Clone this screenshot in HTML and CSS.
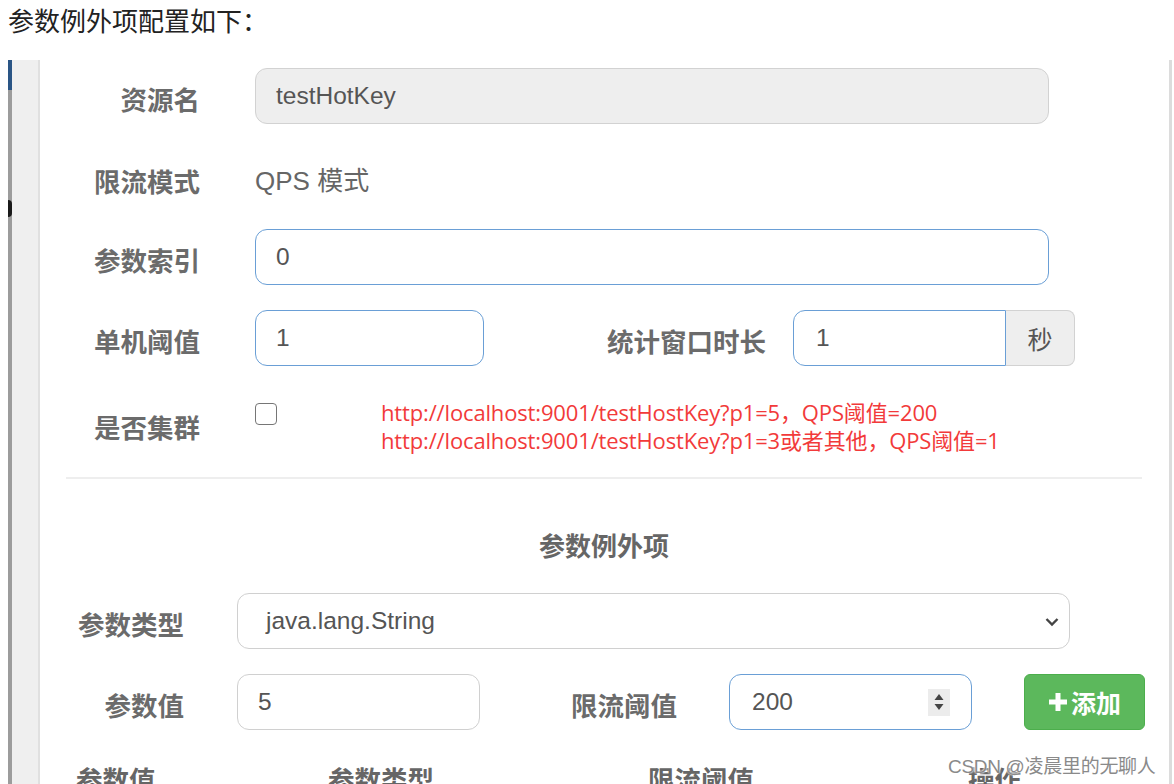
FILE: index.html
```html
<!DOCTYPE html>
<html lang="zh">
<head>
<meta charset="utf-8">
<link rel="stylesheet" href="styles.css">
</head>
<body>
<p class="intro">参数例外项配置如下：</p>
<div class="frame">
  <div class="gutter">
    <div class="rail"><span class="blob"></span></div>
    <div class="shade"></div>
  </div>
  <div class="content">
    <div class="row r1">
      <div class="label l1">资源名</div>
      <div class="field disabled w-full">testHotKey</div>
    </div>
    <div class="row r2">
      <div class="label l1">限流模式</div>
      <div class="static">QPS 模式</div>
    </div>
    <div class="row r3">
      <div class="label l1">参数索引</div>
      <div class="field focus w-full">0</div>
    </div>
    <div class="row r4">
      <div class="label l1">单机阈值</div>
      <div class="field focus w-small">1</div>
      <div class="label l-window">统计窗口时长</div>
      <div class="group">
        <div class="field focus group-input">1</div>
        <div class="addon">秒</div>
      </div>
    </div>
    <div class="row r5">
      <div class="label l1 l-cluster">是否集群</div>
      <div class="check"></div>
      <div class="note">
        <div>http://localhost:9001/testHostKey?p1=5，QPS阈值=200</div>
        <div>http://localhost:9001/testHostKey?p1=3或者其他，QPS阈值=1</div>
      </div>
    </div>
    <div class="divider"></div>
    <div class="section-title">参数例外项</div>
    <div class="row r6">
      <div class="label l2">参数类型</div>
      <div class="field select">
        <span>java.lang.String</span>
        <svg class="chev" width="14" height="10" viewBox="0 0 14 10"><path d="M1.5 2 L7 7.5 L12.5 2" fill="none" stroke="#444" stroke-width="2.4"/></svg>
      </div>
    </div>
    <div class="row r7">
      <div class="label l2">参数值</div>
      <div class="field w-mid">5</div>
      <div class="label l-limit">限流阈值</div>
      <div class="field focus w-mid number">
        <span>200</span>
        <span class="spin">
          <svg width="12" height="22" viewBox="0 0 12 22"><path d="M1.5 9 L6 3 L10.5 9 Z" fill="#444"/><path d="M1.5 13 L6 19 L10.5 13 Z" fill="#444"/></svg>
        </span>
      </div>
      <div class="btn-add">
        <svg width="20" height="20" viewBox="0 0 20 20"><path d="M7.5 1 H12.5 V7.5 H19 V12.5 H12.5 V19 H7.5 V12.5 H1 V7.5 H7.5 Z" fill="#fff"/></svg>
        <span>添加</span>
      </div>
    </div>
    <div class="thead">
      <div>参数值</div>
      <div>参数类型</div>
      <div>限流阈值</div>
      <div>操作</div>
    </div>
  </div>
  <div class="edge"></div>
</div>
<div class="watermark">CSDN @凌晨里的无聊人</div>
</body>
</html>
```
FILE: styles.css
```css
html, body {
  margin: 0;
  padding: 0;
  background: #fff;
  width: 1174px;
  height: 784px;
  overflow: hidden;
}
body {
  position: relative;
  font-family: "Liberation Sans", "Noto Sans CJK SC", sans-serif;
}
.intro {
  margin: 0;
  height: 60px;
  line-height: 40px;
  padding-left: 8px;
  font-size: 26px;
  color: #222;
  font-family: "Noto Sans CJK SC", sans-serif;
}
.frame {
  display: flex;
  height: 724px;
  overflow: hidden;
}
.gutter {
  display: flex;
  width: 40px;
  padding-left: 8px;
  box-sizing: border-box;
  flex: none;
}
.rail {
  position: relative;
  width: 4px;
  background: linear-gradient(#2a5585 0, #2a5585 30px, #9c9c9c 30px);
}
.blob {
  position: absolute;
  left: 0;
  top: 140px;
  width: 4px;
  height: 17px;
  border-radius: 0 8px 8px 0;
  background: #1a1a1a;
}
.shade {
  width: 26px;
  background: #efefef;
  border-right: 2px solid #e0e0e0;
}
.content {
  width: 1129px;
  flex: none;
  position: relative;
}
.edge {
  width: 3px;
  background: #dcdcdc;
  flex: none;
}
.row {
  display: flex;
  align-items: center;
}
.r1 { margin-top: 8px; height: 56px; }
.r2 { margin-top: 26px; height: 56px; }
.r3 { margin-top: 23px; height: 56px; }
.r4 { margin-top: 25px; height: 56px; }
.r5 { margin-top: 33px; height: 60px; align-items: flex-start; }
.r6 { margin-top: 32px; height: 56px; }
.r7 { margin-top: 25px; height: 56px; }
.label {
  font-family: "Noto Sans CJK SC", sans-serif;
  font-weight: 700;
  font-size: 26.5px;
  color: #6b6b6b;
  text-align: right;
  box-sizing: border-box;
  padding-top: 5px;
  flex: none;
}
.l1 { width: 160px; margin-right: 55px; }
.l2 { width: 144px; margin-right: 53px; }
.l-window { width: 282px; margin-right: 27px; }
.l-limit { width: 197px; margin-right: 52px; }
.l-cluster { padding-top: 8px; }
.static {
  font-family: "Liberation Sans", "Noto Sans CJK SC", sans-serif;
  font-size: 26px;
  color: #666;
}
.field {
  box-sizing: border-box;
  height: 56px;
  border: 1.5px solid #d0d0d0;
  border-radius: 12px;
  padding: 0 20px;
  display: flex;
  align-items: center;
  font-size: 24.5px;
  color: #555;
  background: #fff;
  flex: none;
}
.disabled {
  background: #eee;
  border-color: #d2d2d2;
}
.focus {
  border-color: #6a9fd6;
}
.w-full { width: 794px; }
.w-small { width: 229px; }
.w-mid { width: 243px; }
.group {
  display: flex;
  height: 56px;
}
.group-input {
  width: 213px;
  border-radius: 12px 0 0 12px;
  padding-left: 22px;
}
.addon {
  width: 69px;
  box-sizing: border-box;
  height: 56px;
  background: #eee;
  border: 1.5px solid #d2d2d2;
  border-left: none;
  border-radius: 0 8px 8px 0;
  display: flex;
  align-items: center;
  justify-content: center;
  font-family: "Noto Sans CJK SC", sans-serif;
  font-size: 25px;
  color: #555;
}
.check {
  box-sizing: border-box;
  width: 22px;
  height: 22px;
  margin-top: 4px;
  border: 1.5px solid #767676;
  border-radius: 4px;
  flex: none;
}
.note {
  margin-left: 104px;
  margin-top: -1px;
  font-size: 22px;
  line-height: 28px;
  color: #f23a3a;
  font-family: "Open Sans", "Noto Sans CJK SC", sans-serif;
  letter-spacing: -0.15px;
}
.divider {
  margin: 18px 0 0 26px;
  width: 1076px;
  height: 2px;
  background: #eeeeee;
}
.section-title {
  width: 1128px;
  margin-top: 50px;
  text-align: center;
  font-family: "Noto Sans CJK SC", sans-serif;
  font-weight: 700;
  font-size: 26px;
  color: #666;
  line-height: 32px;
}
.select {
  width: 833px;
  justify-content: space-between;
  padding-left: 28px;
  padding-right: 10px;
}
.chev { margin-top: 2px; }
.number {
  justify-content: space-between;
  padding-left: 22px;
  padding-right: 21px;
}
.spin {
  width: 22px;
  height: 27px;
  background: #ececec;
  display: flex;
  align-items: center;
  justify-content: center;
}
.btn-add {
  margin-left: 52px;
  box-sizing: border-box;
  width: 121px;
  height: 56px;
  margin-top: -1px;
  background: #5cb85c;
  border: 1px solid #4cae4c;
  border-radius: 6px;
  display: flex;
  align-items: center;
  justify-content: center;
  gap: 3px;
  color: #fff;
  font-family: "Noto Sans CJK SC", sans-serif;
  font-weight: 700;
  font-size: 25px;
}
.thead {
  display: grid;
  grid-template-columns: 252px 320px 320px 200px;
  padding-left: 36px;
  margin-top: 32px;
  font-family: "Noto Sans CJK SC", sans-serif;
  font-weight: 700;
  font-size: 26.5px;
  color: #666;
  line-height: 34px;
}
.watermark {
  position: absolute;
  left: 948px;
  top: 751px;
  font-family: "Liberation Sans", "Noto Sans CJK SC", sans-serif;
  font-size: 19px;
  color: #8a8a8a;
  letter-spacing: -0.3px;
  text-shadow: 0 0 2px #fff, 0 0 2px #fff;
}
```
